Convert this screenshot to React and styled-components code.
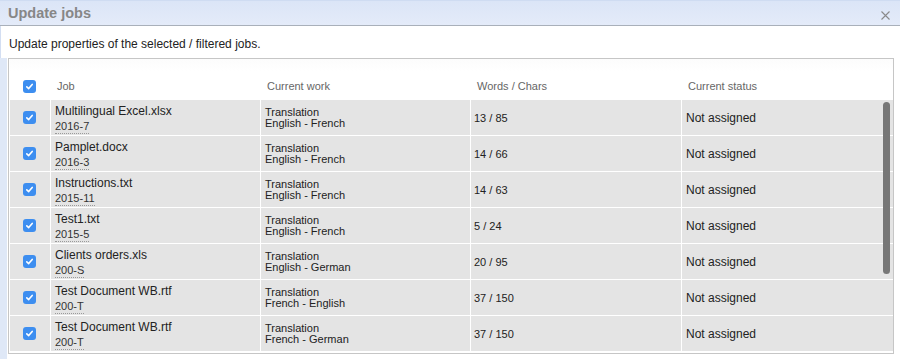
import React from "react";
import styled, { createGlobalStyle } from "styled-components";

const Global = createGlobalStyle`
  html, body { margin: 0; padding: 0; background: #fff; }
  body { font-family: "Liberation Sans", Arial, sans-serif; color: #222; }
`;

const Dialog = styled.div`
  width: 900px;
  height: 359px;
  display: flex;
  flex-direction: column;
  background: #fff;
  overflow: hidden;
`;

const TitleBar = styled.div`
  flex: none;
  display: flex;
  align-items: center;
  justify-content: space-between;
  padding: 0 10px 0 8px;
  background: linear-gradient(#dbe5f7, #e4ebf9);
  border-top: 1px solid #cfdcf2;
  border-bottom: 1px solid #a9b0ba;
  box-sizing: border-box;
  height: 26px;
`;

const Title = styled.div`
  font-size: 14.5px;
  font-weight: bold;
  color: #878787;
`;

const Close = styled.svg`
  width: 9px;
  height: 9px;
  margin-top: 4px;
`;

const Intro = styled.div`
  font-size: 12px;
  color: #222;
  padding: 11px 8px 0 8px;
  height: 21px;
  border-left: 1px solid #d3def2;
`;

const TableSection = styled.div`
  flex: 1;
  display: flex;
  border-left: 7px solid #dfe8f7;
  padding-left: 1px;
  padding-right: 6px;
  align-items: flex-start;
`;

const TableBox = styled.div`
  position: relative;
  flex: 1;
  border: 1px solid #c6c6c6;
  padding-left: 1px;
  height: 294px;
  overflow: hidden;
`;

const cols = "40px 209px 209px 210px 1fr";

const HeaderRow = styled.div`
  display: grid;
  grid-template-columns: ${cols};
  column-gap: 1px;
  height: 40px;
  align-items: end;
  background: linear-gradient(#fcfcfc, #fff 30%);
`;

const HeadCell = styled.div`
  font-size: 11px;
  color: #666;
  padding: 0 0 6px ${(p) => p.$pad ?? 6}px;
  display: flex;
  justify-content: ${(p) => (p.$center ? "center" : "flex-start")};
  align-items: center;
  height: 14px;
`;

const Body = styled.div`
  display: flex;
  flex-direction: column;
  gap: 1px;
  margin-top: 1px;
`;

const Row = styled.div`
  display: grid;
  grid-template-columns: ${cols};
  column-gap: 1px;
  height: 35px;
`;

const Cell = styled.div`
  background: #e4e4e4;
  display: flex;
  flex-direction: column;
  justify-content: center;
  align-items: ${(p) => (p.$center ? "center" : "flex-start")};
  padding-left: ${(p) => p.$pad ?? 4}px;
  padding-top: ${(p) => p.$top ?? 0}px;
  font-size: ${(p) => p.$size || 12}px;
  color: #222;
  line-height: ${(p) => p.$lh || 14}px;
`;

const JobName = styled.div`
  font-size: 12px;
  line-height: 15px;
  color: #222;
`;

const JobCode = styled.span`
  font-size: 11px;
  line-height: 13px;
  color: #333;
  border-bottom: 1px dotted #9a9a9a;
  margin-top: 1px;
`;

const Box = styled.span`
  width: 13px;
  height: 13px;
  border-radius: 3px;
  background: #3d8ef0;
  display: inline-flex;
  align-items: center;
  justify-content: center;
  margin-left: ${(p) => p.$shift || 0}px;
`;

const Thumb = styled.div`
  position: absolute;
  right: 3px;
  top: 43px;
  width: 7px;
  height: 172px;
  border-radius: 4px;
  background: #777;
`;

const Check = ({ shift }) => (
  <Box $shift={shift}>
    <svg width="9" height="9" viewBox="0 0 9 9">
      <path d="M1.8 4.8 L3.7 6.6 L7.2 2.4" fill="none" stroke="#fff" strokeWidth="1.6" strokeLinecap="round" strokeLinejoin="round" />
    </svg>
  </Box>
);

const jobs = [
  ["Multilingual Excel.xlsx", "2016-7", "English - French", "13 / 85"],
  ["Pamplet.docx", "2016-3", "English - French", "14 / 66"],
  ["Instructions.txt", "2015-11", "English - French", "14 / 63"],
  ["Test1.txt", "2015-5", "English - French", "5 / 24"],
  ["Clients orders.xls", "200-S", "English - German", "20 / 95"],
  ["Test Document WB.rtf", "200-T", "French - English", "37 / 150"],
  ["Test Document WB.rtf", "200-T", "French - German", "37 / 150"],
];

export default function App() {
  return (
    <>
      <Global />
      <Dialog>
        <TitleBar>
          <Title>Update jobs</Title>
          <Close viewBox="0 0 9 9">
            <path d="M0.5 0.5 L8.5 8.5 M8.5 0.5 L0.5 8.5" stroke="#8a8a8a" strokeWidth="1.1" />
          </Close>
        </TitleBar>
        <Intro>Update properties of the selected / filtered jobs.</Intro>
        <TableSection>
          <TableBox>
            <HeaderRow>
              <HeadCell $center $pad={0}>
                <Check shift={-1} />
              </HeadCell>
              <HeadCell>Job</HeadCell>
              <HeadCell>Current work</HeadCell>
              <HeadCell>Words / Chars</HeadCell>
              <HeadCell>Current status</HeadCell>
            </HeaderRow>
            <Body>
              {jobs.map((j, i) => (
                <Row key={i}>
                  <Cell $center $pad={0}>
                    <Check shift={-1} />
                  </Cell>
                  <Cell $pad={4} $top={2}>
                    <JobName>{j[0]}</JobName>
                    <JobCode>{j[1]}</JobCode>
                  </Cell>
                  <Cell $pad={4} $size={11} $lh={11}>
                    <div>Translation</div>
                    <div>{j[2]}</div>
                  </Cell>
                  <Cell $pad={3} $size={11}>
                    {j[3]}
                  </Cell>
                  <Cell $pad={4}>Not assigned</Cell>
                </Row>
              ))}
            </Body>
            <Thumb />
          </TableBox>
        </TableSection>
      </Dialog>
    </>
  );
}
